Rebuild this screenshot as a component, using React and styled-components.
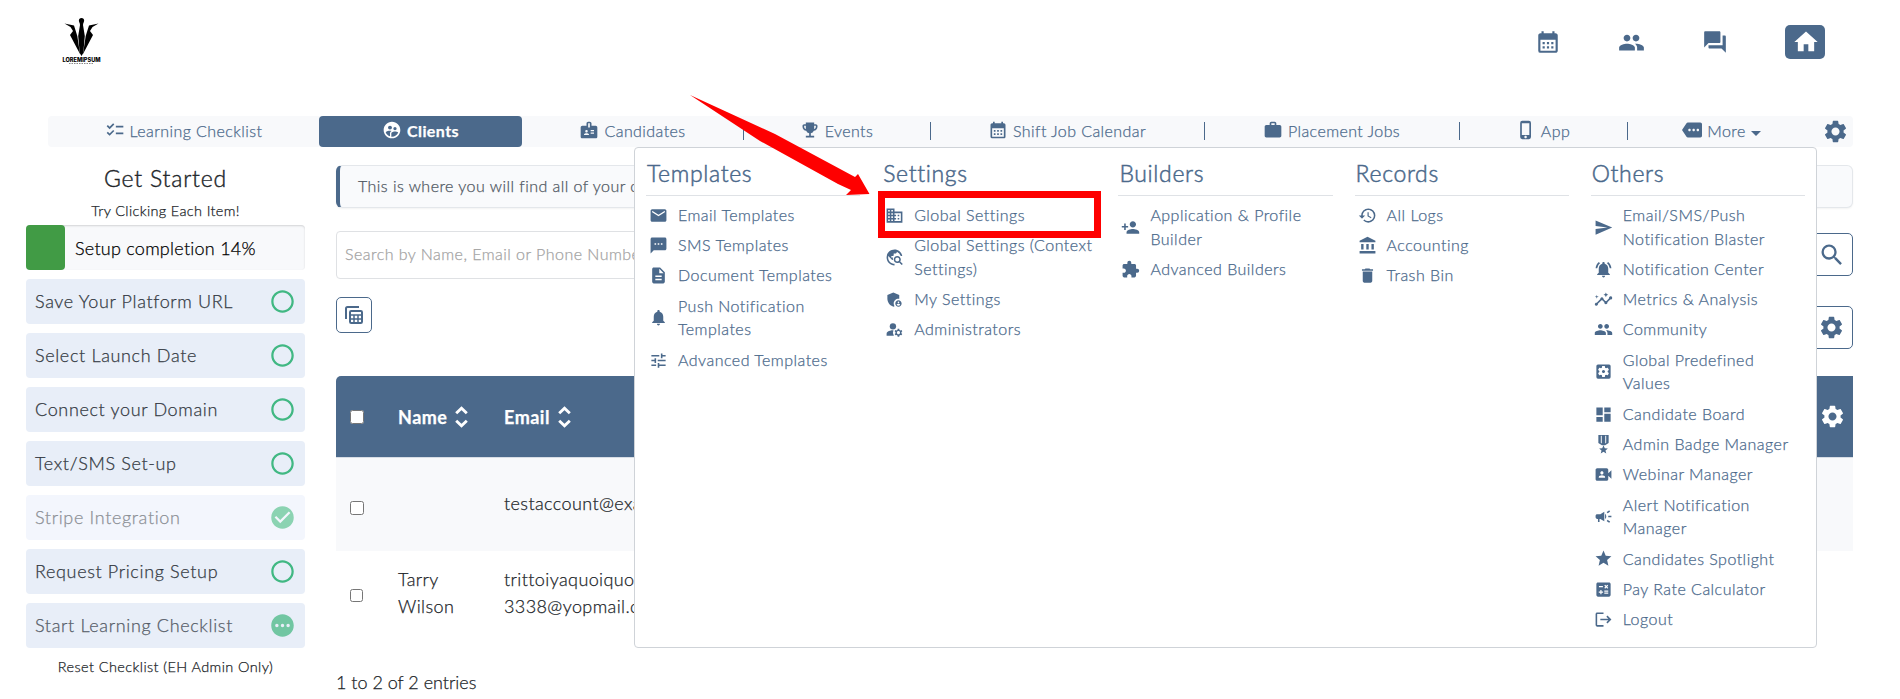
import styled, { createGlobalStyle } from "styled-components";
import {
  MdAccountBalance,
  MdAdminPanelSettings,
  MdBadge,
  MdBusiness,
  MdCalculate,
  MdCalendarMonth,
  MdCampaign,
  MdCheckCircle,
  MdChecklist,
  MdDashboard,
  MdDelete,
  MdDescription,
  MdEmail,
  MdEmojiEvents,
  MdExtension,
  MdHistory,
  MdHome,
  MdInsights,
  MdLogout,
  MdManageAccounts,
  MdMore,
  MdNotifications,
  MdNotificationsActive,
  MdPending,
  MdPeople,
  MdPersonAdd,
  MdPhoneIphone,
  MdQuestionAnswer,
  MdRadioButtonUnchecked,
  MdSearch,
  MdSend,
  MdSettings,
  MdSettingsApplications,
  MdSms,
  MdStar,
  MdSupervisedUserCircle,
  MdTravelExplore,
  MdTune,
  MdVideoCameraFront,
  MdWork,
} from "react-icons/md";

const MedalIcon = () => (
  <svg viewBox="0 0 24 24" fill="currentColor">
    <path d="M5.500 0h13v10L14 13h-4l-4.500-3zM8.600 1v8.800l1.200.8V1zM14.200 1v9.600l1.200-.8V1z" fillRule="evenodd" />
    <path d="M12 13l1.600 3.600 3.900.3-3 2.600 1 4-3.500-2.200-3.500 2.200 1-4-3-2.600 3.900-.3z" />
  </svg>
);

const TablesIcon = () => (
  <svg width="18" height="18" viewBox="0 0 18 18" fill="none" stroke="currentColor">
    <path d="M1 13V2.500Q1 1 2.500 1H14" strokeWidth="2" />
    <rect x="5" y="5" width="12" height="12" rx="1.200" strokeWidth="2" />
    <path d="M5 9h12M5 13h12M9 9v8M13 9v8" strokeWidth="1.500" />
  </svg>
);

const SortIcon = () => (
  <svg width="13" height="22" viewBox="0 0 13 22" fill="none" stroke="currentColor" strokeWidth="2.900">
    <path d="M1.200 7.200l5.300-5 5.300 5M1.200 14.800l5.300 5 5.300-5" />
  </svg>
);

const Logo = () => (
  <LogoSvg viewBox="0 0 44 52">
    <circle cx="20.500" cy="3.500" r="2.600" />
    <path d="M18.500 5h4l-.5 3 1.800 11-1.500 17-1.800 3-1.800-3-1.500-17L19 8z" />
    <path d="M3.500 6.500l9.500 2L16.300 19l2.700 18-10-19 3-4-2.500-4z" />
    <path d="M37.500 6.500l-9.500 2L24.700 19 22 37l10-19-3-4 2.500-4z" />
    <text x="1.500" y="44.500" fontSize="6" fontWeight="800" textLength="38" lengthAdjust="spacingAndGlyphs">
      LOREMIPSUM
    </text>
    <path d="M8 46.500h25" stroke="#888" strokeWidth="1" strokeDasharray="1.500 1" />
  </LogoSvg>
);

const steps = [
  { label: "Save Your Platform URL" },
  { label: "Select Launch Date" },
  { label: "Connect your Domain" },
  { label: "Text/SMS Set-up" },
  { label: "Stripe Integration", status: "done" },
  { label: "Request Pricing Setup" },
  { label: "Start Learning Checklist", status: "pending" },
];

const menu = [
  {
    title: "Templates",
    items: [
      [MdEmail, "Email Templates"],
      [MdSms, "SMS Templates"],
      [MdDescription, "Document Templates"],
      [MdNotifications, "Push Notification", "Templates"],
      [MdTune, "Advanced Templates"],
    ],
  },
  {
    title: "Settings",
    items: [
      [MdBusiness, "Global Settings"],
      [MdTravelExplore, "Global Settings (Context", "Settings)"],
      [MdAdminPanelSettings, "My Settings"],
      [MdManageAccounts, "Administrators"],
    ],
  },
  {
    title: "Builders",
    items: [
      [MdPersonAdd, "Application & Profile", "Builder"],
      [MdExtension, "Advanced Builders"],
    ],
  },
  {
    title: "Records",
    items: [
      [MdHistory, "All Logs"],
      [MdAccountBalance, "Accounting"],
      [MdDelete, "Trash Bin"],
    ],
  },
  {
    title: "Others",
    items: [
      [MdSend, "Email/SMS/Push", "Notification Blaster"],
      [MdNotificationsActive, "Notification Center"],
      [MdInsights, "Metrics & Analysis"],
      [MdPeople, "Community"],
      [MdSettingsApplications, "Global Predefined", "Values"],
      [MdDashboard, "Candidate Board"],
      [MedalIcon, "Admin Badge Manager"],
      [MdVideoCameraFront, "Webinar Manager"],
      [MdCampaign, "Alert Notification", "Manager"],
      [MdStar, "Candidates Spotlight"],
      [MdCalculate, "Pay Rate Calculator"],
      [MdLogout, "Logout"],
    ],
  },
];

const App = () => (
  <Page>
    <GlobalStyle />
    <Header>
      <Logo />
      <HeaderActions>
        <MdCalendarMonth size={26} />
        <MdPeople size={27} />
        <MdQuestionAnswer size={26} />
        <HomeButton>
          <MdHome size={28} />
        </HomeButton>
      </HeaderActions>
    </Header>

    <Nav>
      <Tab $width={271}>
        <MdChecklist />
        <TabText>Learning Checklist</TabText>
      </Tab>
      <Tab $width={203} $active>
        <MdSupervisedUserCircle />
        <TabText>Clients</TabText>
      </Tab>
      <Tab $width={221}>
        <MdBadge />
        <TabText>Candidates</TabText>
      </Tab>
      <Tab $width={187} $divider>
        <MdEmojiEvents />
        <TabText>Events</TabText>
      </Tab>
      <Tab $width={274} $divider>
        <MdCalendarMonth />
        <TabText>Shift Job Calendar</TabText>
      </Tab>
      <Tab $width={255} $divider>
        <MdWork />
        <TabText>Placement Jobs</TabText>
      </Tab>
      <Tab $width={168} $divider>
        <MdPhoneIphone />
        <TabText>App</TabText>
      </Tab>
      <Tab $width={189} $divider>
        <MdMore />
        <TabText>More</TabText>
        <Caret />
      </Tab>
      <NavGear>
        <MdSettings size={27} />
      </NavGear>
    </Nav>

    <Body>
      <Sidebar>
        <SidebarTitle>Get Started</SidebarTitle>
        <SidebarHint>Try Clicking Each Item!</SidebarHint>
        <Progress>
          <ProgressBar />
          <span>Setup completion 14%</span>
        </Progress>
        {steps.map((step) => (
          <Step key={step.label} $status={step.status}>
            <span>{step.label}</span>
            {!step.status && <MdRadioButtonUnchecked size={27} />}
            {step.status === "done" && <MdCheckCircle size={27} />}
            {step.status === "pending" && <MdPending size={27} />}
          </Step>
        ))}
        <ResetLink>Reset Checklist (EH Admin Only)</ResetLink>
      </Sidebar>

      <Main>
        <Notice>This is where you will find all of your clients</Notice>
        <SearchRow>
          <SearchInput placeholder="Search by Name, Email or Phone Number" />
          <SquareButton $size={43}>
            <MdSearch size={28} />
          </SquareButton>
        </SearchRow>
        <ToolRow>
          <SquareButton $size={36}>
            <TablesIcon />
          </SquareButton>
          <SquareButton $size={43} $drop={9}>
            <MdSettings size={27} />
          </SquareButton>
        </ToolRow>
        <TableHead>
          <Check type="checkbox" $size={14} />
          <HeadCell>
            Name <SortIcon />
          </HeadCell>
          <HeadCell>
            Email <SortIcon />
          </HeadCell>
          <MdSettings size={27} />
        </TableHead>
        <TableRow $shaded>
          <Check type="checkbox" $size={14} $drop={6} />
          <span />
          <Cell>testaccount@example.com</Cell>
        </TableRow>
        <TableRow>
          <Check type="checkbox" $size={13} $drop={3} />
          <Cell>
            Tarry
            <br />
            Wilson
          </Cell>
          <Cell>
            trittoiyaquoiquoi-
            <br />
            3338@yopmail.com
          </Cell>
        </TableRow>
        <Entries>1 to 2 of 2 entries</Entries>
      </Main>
    </Body>

    <MegaMenu>
      {menu.map((column) => (
        <MenuColumn key={column.title}>
          <MenuTitle>{column.title}</MenuTitle>
          {column.items.map(([Icon, line, rest]) => (
            <MenuItem key={line} $tall={Boolean(rest)}>
              <Icon />
              <span>
                {line}
                {rest && <br />}
                {rest}
              </span>
            </MenuItem>
          ))}
        </MenuColumn>
      ))}
    </MegaMenu>
    <Highlight />
    <Arrow viewBox="0 0 180 101">
      <path d="M0 0L85 39 165 82 168 79 179.500 99 156 100 161 95 148 89 70 46z" />
    </Arrow>
  </Page>
);

export default App;

const GlobalStyle = createGlobalStyle`
  * {
    box-sizing: border-box;
  }
  body {
    margin: 0;
    background: #fff;
    color: #212529;
    font-family: Lato, "Liberation Sans", sans-serif;
    font-weight: 300;
    -webkit-text-stroke: 0.25px currentColor;
    overflow: hidden;
  }
  svg {
    flex-shrink: 0;
  }
`;
const Page = styled.div`
  position: relative;
  width: 1900px;
  height: 699px;
  overflow: hidden;
`;
const Header = styled.header`
  display: flex;
  justify-content: space-between;
  height: 116px;
  padding: 17px 75px 0 61px;
`;
const LogoSvg = styled.svg`
  width: 44px;
  height: 52px;
  font-family: Inter, sans-serif;
  -webkit-text-stroke: 0;
`;
const HeaderActions = styled.div`
  display: grid;
  grid-template-columns: 83px 84px 84px 40px;
  align-items: center;
  height: 50px;
  color: #4b698b;
  svg {
    margin-left: 1px;
  }
`;
const HomeButton = styled.div`
  display: flex;
  align-items: center;
  justify-content: center;
  width: 40px;
  height: 34px;
  border-radius: 5px;
  color: #fff;
  background: #4b698b;
`;
const Nav = styled.nav`
  display: flex;
  width: 1805px;
  height: 31px;
  margin-left: 48px;
  border-radius: 4px;
  background: #f8f9fb;
`;
const Tab = styled.div`
  display: flex;
  align-items: center;
  justify-content: center;
  gap: 5px;
  width: ${({ $width }) => $width}px;
  border-radius: ${({ $active }) => ($active ? "4px" : "0")};
  color: ${({ $active }) => ($active ? "#fff" : "#4b698b")};
  background-color: ${({ $active }) => ($active ? "#4b698b" : "transparent")};
  font-weight: ${({ $active }) => ($active ? 700 : 300)};
  background-image: ${({ $divider }) =>
    $divider ? "linear-gradient(#4b698b, #4b698b)" : "none"};
  background-size: 1px 18px;
  background-repeat: no-repeat;
  background-position: 0 6px;
  svg {
    width: 20px;
    height: 20px;
    margin-top: -3px;
  }
`;
const TabText = styled.span`
  padding-bottom: 2px;
  font-size: 16px;
  letter-spacing: 0.42px;
`;
const Caret = styled.i`
  border: 5px solid transparent;
  border-top-color: #4b698b;
  border-bottom: 0;
  margin-top: 3px;
`;
const NavGear = styled.div`
  display: flex;
  align-items: center;
  margin-left: 6px;
  color: #4b698b;
`;
const Body = styled.div`
  display: flex;
  gap: 31px;
  padding-left: 26px;
`;
const Sidebar = styled.aside`
  width: 279px;
  padding-top: 16px;
`;
const SidebarTitle = styled.h2`
  margin: 0;
  font-size: 23px;
  font-weight: 300;
  line-height: 31px;
  letter-spacing: 0.8px;
  text-align: center;
  -webkit-text-stroke: 0.4px currentColor;
`;
const SidebarHint = styled.p`
  margin: 0 0 3px;
  padding-top: 5px;
  font-size: 14.500px;
  line-height: 23px;
  letter-spacing: 0.35px;
  text-align: center;
`;
const Progress = styled.div`
  display: flex;
  align-items: center;
  gap: 10px;
  height: 45px;
  border-radius: 4px;
  font-size: 18px;
  letter-spacing: 0.25px;
  color: #000;
  background: #f8f9fb;
  box-shadow: inset 0 1px 2px rgba(0, 0, 0, 0.15);
`;
const ProgressBar = styled.div`
  width: 39px;
  height: 45px;
  border-radius: 4px;
  background: #419b45;
`;
const Step = styled.div`
  display: flex;
  align-items: center;
  justify-content: space-between;
  height: 45px;
  margin-top: 9px;
  padding: 0 9px;
  border-radius: 4px;
  font-size: 18px;
  letter-spacing: 0.65px;
  color: ${({ $status }) =>
    $status === "done" ? "#8c9096" : $status ? "#565d68" : "#343a43"};
  background: ${({ $status }) => ($status === "done" ? "#f3f6fd" : "#e8eef8")};
  span {
    padding-bottom: 1px;
  }
  svg {
    color: ${({ $status }) =>
      $status === "done" ? "#8bd3b2" : $status ? "#71c6a2" : "#41b883"};
  }
`;
const ResetLink = styled.p`
  margin: 8px 0;
  font-size: 14.500px;
  line-height: 22px;
  letter-spacing: 0.4px;
  text-align: center;
`;
const Main = styled.main`
  width: 1517px;
  padding-top: 18px;
`;
const Notice = styled.div`
  height: 43px;
  padding-left: 18px;
  border: 1px solid #e4e7eb;
  border-left: 4px solid #4b698b;
  border-radius: 6px;
  font-size: 16px;
  line-height: 40px;
  letter-spacing: 0.46px;
  color: #4f5762;
  background: #f9fafc;
  box-shadow: 0 1px 2px rgba(0, 0, 0, 0.05);
`;
const SearchRow = styled.div`
  display: flex;
  align-items: flex-start;
  justify-content: space-between;
  margin-top: 23px;
  button {
    margin-top: 2px;
  }
`;
const SearchInput = styled.input`
  width: 1440px;
  height: 48px;
  padding: 0 8px 3px;
  border: 1px solid #dfe1e4;
  border-radius: 4px;
  font: 300 16px Lato, sans-serif;
  letter-spacing: 0.47px;
  &::placeholder {
    color: #a3a3a3;
    -webkit-text-stroke: 0.25px #a3a3a3;
  }
`;
const SquareButton = styled.button`
  display: flex;
  align-items: center;
  justify-content: center;
  width: ${({ $size }) => $size}px;
  height: ${({ $size }) => $size}px;
  margin-top: ${({ $drop }) => $drop || 0}px;
  padding: 0;
  border: 1px solid #4b698b;
  border-radius: 5px;
  color: #4b698b;
  background: #fff;
`;
const ToolRow = styled.div`
  display: flex;
  align-items: flex-start;
  justify-content: space-between;
  height: 79px;
  margin-top: 18px;
`;
const TableHead = styled.div`
  display: grid;
  grid-template-columns: 49px 106px 1fr 34px;
  align-items: center;
  height: 82px;
  padding-left: 13px;
  border-bottom: 1px solid #d7dde5;
  border-radius: 5px 0 0 0;
  color: #fff;
  background: #4b698b;
`;
const HeadCell = styled.div`
  display: flex;
  align-items: center;
  gap: 8px;
  font-size: 18px;
  font-weight: 700;
  letter-spacing: 0.5px;
`;
const TableRow = styled.div`
  display: grid;
  grid-template-columns: 49px 106px 1fr;
  align-items: center;
  height: ${({ $shaded }) => ($shaded ? 93 : 85)}px;
  padding-left: 13px;
  background: ${({ $shaded }) => ($shaded ? "#f8f9fb" : "#fff")};
`;
const Check = styled.input`
  width: ${({ $size }) => $size}px;
  height: ${({ $size }) => $size}px;
  margin: ${({ $drop }) => $drop || 0}px 0 0 1px;
`;
const Cell = styled.span`
  padding-bottom: 2px;
  font-size: 18px;
  line-height: 27px;
  letter-spacing: 0.4px;
`;
const Entries = styled.p`
  margin: 34px 0 0;
  font-size: 18px;
  line-height: 24px;
`;
const MegaMenu = styled.div`
  position: absolute;
  top: 147px;
  left: 634px;
  display: flex;
  gap: 22px;
  width: 1183px;
  height: 501px;
  padding: 10px 11px;
  border: 1px solid #cfd3d8;
  border-radius: 4px;
  color: #4b698b;
  background: #fff;
`;
const MenuColumn = styled.section`
  width: 214.300px;
`;
const MenuTitle = styled.h3`
  height: 38px;
  margin: 0 0 4px;
  padding-left: 1px;
  border-bottom: 1px solid #dfe2e6;
  font-size: 23px;
  font-weight: 300;
  line-height: 30px;
  letter-spacing: 0.65px;
  -webkit-text-stroke: 0.5px currentColor;
`;
const MenuItem = styled.div`
  display: flex;
  align-items: center;
  gap: 10px;
  height: ${({ $tall }) => ($tall ? 54 : 30.300)}px;
  padding-left: 3px;
  font-size: 16px;
  line-height: 23.500px;
  letter-spacing: 0.48px;
  white-space: nowrap;
  span {
    padding-bottom: 1px;
  }
  svg {
    width: 19px;
    height: 19px;
  }
`;
const Highlight = styled.div`
  position: absolute;
  top: 191px;
  left: 878px;
  width: 223px;
  height: 47px;
  border: 7px solid #fe0000;
`;
const Arrow = styled.svg`
  position: absolute;
  top: 95px;
  left: 690px;
  width: 180px;
  height: 101px;
  fill: #fe0000;
`;
